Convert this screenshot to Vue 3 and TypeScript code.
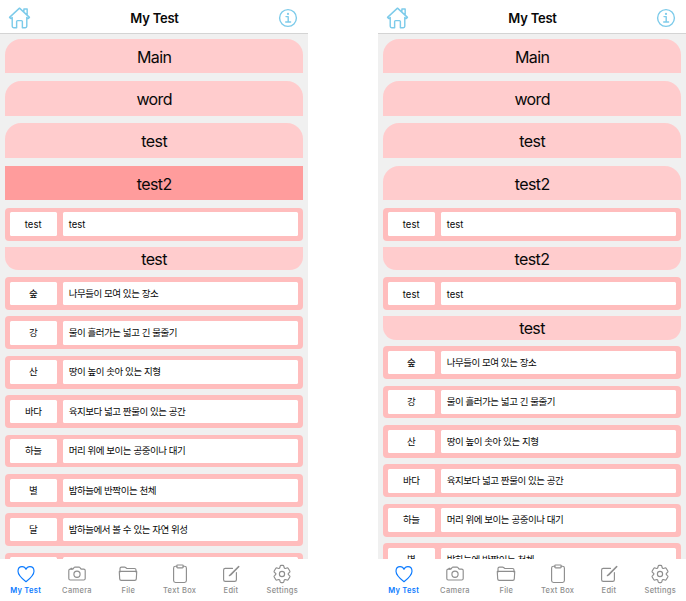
<script setup lang="ts">
interface Block {
  kind: 'group' | 'footer' | 'word'
  text: string
  meaning?: string
  active?: boolean
  latin?: boolean
}

const group = (text: string, active = false): Block => ({ kind: 'group', text, active })
const footer = (text: string): Block => ({ kind: 'footer', text })
const word = (text: string, meaning: string): Block => ({ kind: 'word', text, meaning, latin: /^[a-z]/i.test(text) })

const words: Block[] = [
  word('숲', '나무들이 모여 있는 장소'),
  word('강', '물이 흘러가는 넓고 긴 물줄기'),
  word('산', '땅이 높이 솟아 있는 지형'),
  word('바다', '육지보다 넓고 짠물이 있는 공간'),
  word('하늘', '머리 위에 보이는 공중이나 대기'),
  word('별', '밤하늘에 반짝이는 천체'),
  word('달', '밤하늘에서 볼 수 있는 자연 위성'),
  word('', ''),
]

const screens: Block[][] = [
  [group('Main'), group('word'), group('test'), group('test2', true), word('test', 'test'), footer('test'), ...words],
  [
    group('Main'), group('word'), group('test'), group('test2'),
    word('test', 'test'), footer('test2'), word('test', 'test'), footer('test'),
    ...words.slice(0, 6),
  ],
]

const tabs: { label: string; paths: string[] }[] = [
  { label: 'My Test', paths: ['M10 17.7C6 14.6 2 11.3 2 7.2C2 4.5 3.8 2.6 6.1 2.6C7.9 2.6 9.3 3.6 10 5.3C10.7 3.6 12.1 2.6 13.9 2.6C16.2 2.6 18 4.5 18 7.2C18 11.3 14 14.6 10 17.7Z'] },
  { label: 'Camera', paths: ['M3.3 5.1H5.5Q6.1 5.1 6.5 4.4L7.1 3.5Q7.4 3.1 8 3.1H12Q12.6 3.1 12.9 3.5L13.5 4.4Q13.9 5.1 14.5 5.1H16.7Q18.2 5.1 18.2 6.6V14.5Q18.2 16 16.7 16H3.3Q1.8 16 1.8 14.5V6.6Q1.8 5.1 3.3 5.1Z', 'M13.1 10.2A3.1 3.1 0 1 1 6.9 10.2A3.1 3.1 0 1 1 13.1 10.2Z', 'M4 5V4.2H5V5'] },
  { label: 'File', paths: ['M2 8V4.6Q2 3.1 3.5 3.1H6.6Q7.1 3.1 7.6 3.5L8.5 4.2Q8.9 4.5 9.5 4.5H16.5Q18 4.5 18 6V8', 'M1.9 7.3H18.1Q18.8 7.3 18.7 8L18.3 14.9Q18.2 16.4 16.8 16.4H3.2Q1.8 16.4 1.7 14.9L1.3 8Q1.2 7.3 1.9 7.3Z'] },
  { label: 'Text Box', paths: ['M7 2.2H5.5Q3.6 2.2 3.6 4.1V16.6Q3.6 18.5 5.5 18.5H14.5Q16.4 18.5 16.4 16.6V4.1Q16.4 2.2 14.5 2.2H13', 'M7.6 1H12.4Q13.2 1 13.2 1.8V3Q13.2 3.8 12.4 3.8H7.6Q6.8 3.8 6.8 3V1.8Q6.8 1 7.6 1Z'] },
  { label: 'Edit', paths: ['M11.5 4.4H4.3Q2.6 4.4 2.6 6.1V15.7Q2.6 17.4 4.3 17.4H13.7Q15.4 17.4 15.4 15.7V8.5', 'M17.6 2.3L9.3 10.6L8.3 11.7L9.7 11L18 2.7'] },
  { label: 'Settings', paths: ['M8.1 2.4Q8.3 1.4 9.2 1.4H10.8Q11.7 1.4 11.9 2.4L12.1 3.5Q12.4 4.6 13.4 4.5L14.9 4Q15.8 3.7 16.3 4.5L17.8 7Q18.3 7.8 17.5 8.4L16.5 9.2Q15.7 10 16.5 10.8L17.5 11.6Q18.3 12.2 17.8 13L16.3 15.5Q15.8 16.3 14.9 16L13.4 15.5Q12.4 15.4 12.1 16.5L11.9 17.6Q11.7 18.6 10.8 18.6H9.2Q8.3 18.6 8.1 17.6L7.9 16.5Q7.6 15.4 6.6 15.5L5.1 16Q4.2 16.3 3.7 15.5L2.2 13Q1.7 12.2 2.5 11.6L3.5 10.8Q4.3 10 3.5 9.2L2.5 8.4Q1.7 7.8 2.2 7L3.7 4.5Q4.2 3.7 5.1 4L6.6 4.5Q7.6 4.6 7.9 3.5Z', 'M12.6 10A2.6 2.6 0 1 1 7.4 10A2.6 2.6 0 1 1 12.6 10Z'] },
]
</script>

<template>
  <main class="board">
    <section v-for="(blocks, s) in screens" :key="s" class="phone">
      <header class="bar">
        <svg class="home" viewBox="0 0 24 24">
          <path d="M1.6 10.8L12 1.2L22.4 10.8L20.9 12.1L19.6 11V20.2Q19.6 21.7 18.1 21.7H15V15.2Q15 14.2 14 14.2H10Q9 14.2 9 15.2V21.7H5.9Q4.4 21.7 4.4 20.2V11L3.1 12.1ZM16.6 4.9V2H20V8" />
        </svg>
        <h1>My Test</h1>
        <svg class="info" viewBox="0 0 20 20">
          <circle cx="10" cy="10" r="8.4" />
          <path d="M8 8.6H10.2V13.9M7.7 14H12.6" />
          <circle class="dot" cx="10" cy="5.9" r="1.1" />
        </svg>
      </header>
      <div class="list">
        <template v-for="(b, i) in blocks" :key="i">
          <div v-if="b.kind === 'group'" class="group" :class="{ active: b.active }">{{ b.text }}</div>
          <div v-else-if="b.kind === 'footer'" class="footer">{{ b.text }}</div>
          <div v-else class="word" :class="{ latin: b.latin }">
            <div class="term">{{ b.text }}</div>
            <div class="meaning">{{ b.meaning }}</div>
          </div>
        </template>
      </div>
      <nav class="tabs">
        <div v-for="(t, i) in tabs" :key="t.label" class="tab" :class="{ selected: i === 0 }">
          <svg viewBox="0 0 20 20"><path v-for="p in t.paths" :key="p" :d="p" /></svg>
          <span>{{ t.label }}</span>
        </div>
      </nav>
    </section>
  </main>
</template>

<style>
body {
  background: #fff;
}
</style>

<style scoped>
.board {
  display: flex;
  justify-content: space-between;
  width: 686px;
  height: 601px;
  overflow: hidden;
  font-family: Inter, "Noto Sans CJK KR", sans-serif;
  color: #080808;
}
.phone {
  display: flex;
  flex-direction: column;
  width: 308px;
  height: 601px;
}
.bar {
  box-sizing: border-box;
  display: flex;
  align-items: center;
  justify-content: space-between;
  flex: none;
  height: 34px;
  padding: 3px 10px 0 8px;
  border-bottom: 1px solid #d4d4d4;
}
h1 {
  margin: 0;
  font-size: 13px;
  line-height: 18px;
  font-weight: 600;
  letter-spacing: -0.25px;
}
svg {
  display: block;
  fill: none;
  stroke: currentColor;
  stroke-linecap: round;
  stroke-linejoin: round;
}
.home {
  width: 23px;
  height: 23px;
  color: #7dcbea;
  stroke-width: 1.5;
}
.info {
  width: 20px;
  height: 20px;
  color: #7dcbea;
  stroke-width: 1.4;
}
.info .dot {
  fill: currentColor;
  stroke: none;
}
.list {
  flex: 1;
  min-height: 0;
  overflow: hidden;
  padding: 5px 5px 0;
  background: #f0f0f0;
}
.group {
  height: 34.4px;
  margin: 0 0 7.8px 0.4px;
  border-radius: 16px 16px 0 0;
  background: #ffcccd;
  font-size: 16px;
  line-height: 36px;
  letter-spacing: -0.6px;
  text-align: center;
}
.group.active {
  border-radius: 0;
  background: #ff9c9c;
}
.footer {
  height: 23.3px;
  margin-bottom: 6.5px;
  border-radius: 0 0 13px 13px;
  background: #ffcccd;
  font-size: 16px;
  line-height: 24px;
  letter-spacing: -0.6px;
  text-align: center;
}
.word {
  box-sizing: border-box;
  display: flex;
  gap: 6px;
  height: 32.9px;
  margin-bottom: 6.5px;
  padding: 4.7px;
  border-radius: 4px;
  background: #ffbdbd;
  font-size: 9.5px;
  line-height: 24px;
  letter-spacing: -0.45px;
}
.word.latin {
  letter-spacing: 0;
  line-height: 25px;
}
.term,
.meaning {
  border-radius: 1.5px;
  background: #fff;
  white-space: nowrap;
}
.term {
  width: 47px;
  text-align: center;
}
.meaning {
  flex: 1;
  padding-left: 6px;
}
.tabs {
  display: grid;
  grid-template-columns: repeat(6, 1fr);
  flex: none;
  height: 42px;
  background: #fff;
}
.tab {
  display: flex;
  flex-direction: column;
  align-items: center;
  padding-top: 5px;
  color: #8e8e8e;
  font-size: 7.5px;
  line-height: 10px;
  letter-spacing: 0.3px;
  font-weight: 500;
  white-space: nowrap;
}
.tab svg {
  width: 20px;
  height: 20px;
  margin-bottom: 1.5px;
  stroke-width: 1.15;
}
.tab.selected {
  color: #0a7aff;
  font-weight: 600;
}
</style>
